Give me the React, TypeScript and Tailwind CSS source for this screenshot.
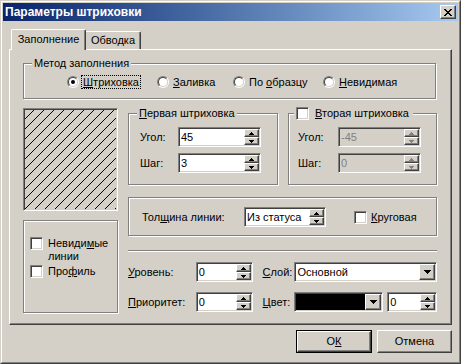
import React from 'react';

const sunken =
  'border border-t-[#808080] border-l-[#808080] border-r-white border-b-white shadow-[inset_1px_1px_0_#404040,inset_-1px_-1px_0_#d4d0c8]';
const raised =
  'border border-t-white border-l-white border-r-[#404040] border-b-[#404040] shadow-[inset_-1px_-1px_0_#808080]';
const etched = 'border border-[#808080] shadow-[inset_1px_1px_0_#fff,1px_1px_0_#fff]';

// small pixel arrows
function Arrow({ down, color = '#000', wide = false }: { down?: boolean; color?: string; wide?: boolean }) {
  const rows = wide ? [7, 5, 3, 1] : [5, 3, 1];
  const w = rows[0];
  const list = down ? rows : [...rows].reverse();
  return (
    <svg width={w} height={rows.length} shapeRendering="crispEdges" className="block">
      {list.map((n, i) => (
        <rect key={i} x={(w - n) / 2} y={i} width={n} height={1} fill={color} />
      ))}
    </svg>
  );
}

function SpinBtn({ down, disabled }: { down?: boolean; disabled?: boolean }) {
  return (
    <div className={`${raised} h-[8px] bg-[#d4d0c8] flex items-center justify-center`}>
      <Arrow down={down} color={disabled ? '#808080' : '#000'} />
    </div>
  );
}

function SpinField({ value, className, disabled }: { value: string; className: string; disabled?: boolean }) {
  return (
    <div
      className={`${sunken} ${className} h-[20px] p-px flex ${
        disabled ? 'bg-[#d4d0c8] text-[#808080]' : 'bg-white'
      }`}
    >
      <div className="flex-1 pl-[1px] leading-[16px]">{value}</div>
      <div className="w-[15px] flex flex-col">
        <SpinBtn disabled={disabled} />
        <SpinBtn down disabled={disabled} />
      </div>
    </div>
  );
}

function DropBtn() {
  return (
    <div className={`${raised} w-[16px] h-full bg-[#d4d0c8] flex items-center justify-center`}>
      <Arrow down wide />
    </div>
  );
}

function Check() {
  return <div className={`${sunken} w-[13px] h-[13px] bg-white shrink-0`} />;
}

function Radio({ checked }: { checked?: boolean }) {
  return (
    <div className="w-[12px] h-[12px] rounded-full border border-t-[#808080] border-l-[#808080] border-r-white border-b-white shrink-0">
      <div className="w-full h-full rounded-full bg-white border border-t-[#404040] border-l-[#404040] border-r-[#d4d0c8] border-b-[#d4d0c8] flex items-center justify-center">
        {checked && <div className="w-[4px] h-[4px] rounded-full bg-black" />}
      </div>
    </div>
  );
}

function Hatch() {
  const lines = [];
  for (let k = -100; k < 100; k += 10) lines.push(k);
  return (
    <svg width="91" height="99" shapeRendering="crispEdges" className="block">
      {lines.map((k) => (
        <line key={k} x1={k} y1={99} x2={k + 99} y2={0} stroke="#000" strokeWidth="1" />
      ))}
    </svg>
  );
}

function CloseGlyph() {
  const rows = ['11....11', '.11..11.', '..1111..', '...11...', '..1111..', '.11..11.', '11....11'];
  return (
    <svg width="8" height="7" shapeRendering="crispEdges" className="block">
      {rows.flatMap((r, y) =>
        r.split('').map((c, x) => (c === '1' ? <rect key={`${x}-${y}`} x={x} y={y} width={1} height={1} fill="#000" /> : null))
      )}
    </svg>
  );
}

export default function App() {
  return (
    <div className="w-[461px] h-[364px] bg-[#d4d0c8] border border-t-[#d4d0c8] border-l-[#d4d0c8] border-r-[#404040] border-b-[#404040] font-['Liberation_Sans',Arial,sans-serif] text-[11px] text-black leading-[13px]">
      <div className="h-full border border-t-white border-l-white border-r-[#808080] border-b-[#808080] p-px">
        {/* Title bar */}
        <div className="h-[18px] bg-linear-to-r from-[#0a246a] to-[#a6caf0] flex items-center justify-between pl-[2px] pr-[2px]">
          <span className="text-white font-bold text-[12px]">Параметры штриховки</span>
          <div className={`${raised} w-[16px] h-[14px] bg-[#d4d0c8] flex items-center justify-center`}>
            <CloseGlyph />
          </div>
        </div>

        <div className="pl-[6px]">
          {/* Tabs */}
          <div className="mt-[8px] h-[20px] flex items-end">
            <div className="ml-[2px] w-[75px] h-[21px] -mb-px relative z-10 bg-[#d4d0c8] border border-b-0 border-t-white border-l-white border-r-[#404040] shadow-[inset_-1px_0_0_#808080] rounded-t-[2px] flex items-center justify-center pb-[2px]">
              Заполнение
            </div>
            <div className="w-[55px] h-[18px] bg-[#d4d0c8] border border-b-0 border-t-white border-l-0 border-r-[#404040] shadow-[inset_-1px_0_0_#808080] rounded-tr-[2px] flex items-center justify-center">
              Обводка
            </div>
          </div>

          {/* Tab panel */}
          <div className={`${raised} w-[443px] h-[276px] pt-[13px] pl-[13px]`}>
            {/* Метод заполнения */}
            <div className={`${etched} relative w-[413px] h-[36px] pt-[11px] pl-[43px]`}>
              <span className="absolute left-[8px] -top-[7px] px-[2px] bg-[#d4d0c8]">Метод заполнения</span>
              <div className="h-[14px] flex items-center">
                <div className="w-[90px] flex items-center">
                  <Radio checked />
                  <span className="ml-[2px] px-[1px] border border-dotted border-black leading-[12px]">
                    <u>Ш</u>триховка
                  </span>
                </div>
                <div className="w-[76px] flex items-center">
                  <Radio />
                  <span className="ml-[4px]">
                    <u>З</u>аливка
                  </span>
                </div>
                <div className="w-[90px] flex items-center">
                  <Radio />
                  <span className="ml-[4px]">
                    По <u>о</u>бразцу
                  </span>
                </div>
                <div className="flex items-center">
                  <Radio />
                  <span className="ml-[4px]">
                    <u>Н</u>евидимая
                  </span>
                </div>
              </div>
            </div>

            <div className="mt-[9px] flex gap-[10px]">
              {/* Left column */}
              <div className="w-[95px]">
                <div className={`${sunken} h-[103px] p-px bg-[#d4d0c8]`}>
                  <Hatch />
                </div>
                <div className={`${etched} mt-[9px] h-[93px] pt-[16px] pl-[6px]`}>
                  <div className="flex items-start">
                    <Check />
                    <span className="ml-[5px]">
                      Невиди<u>м</u>ые
                      <br />
                      линии
                    </span>
                  </div>
                  <div className="mt-[2px] flex items-center">
                    <Check />
                    <span className="ml-[5px]">
                      Про<u>ф</u>иль
                    </span>
                  </div>
                </div>
              </div>

              {/* Right column */}
              <div className="w-[309px] pt-[5px]">
                <div className="flex gap-[10px]">
                  <div className={`${etched} relative w-[150px] h-[72px] pt-[13px] pl-[11px]`}>
                    <span className="absolute left-[8px] -top-[7px] px-[2px] bg-[#d4d0c8]">
                      <u>П</u>ервая штриховка
                    </span>
                    <div className="flex items-center">
                      <span className="w-[38px]">Угол:</span>
                      <SpinField value="45" className="w-[83px]" />
                    </div>
                    <div className="mt-[6px] flex items-center">
                      <span className="w-[38px]">Шаг:</span>
                      <SpinField value="3" className="w-[83px]" />
                    </div>
                  </div>
                  <div className={`${etched} relative w-[149px] h-[72px] pt-[13px] pl-[9px]`}>
                    <span className="absolute left-[5px] -top-[7px] pl-[2px] pr-[4px] bg-[#d4d0c8] flex items-center">
                      <Check />
                      <span className="ml-[6px]">
                        <u>В</u>торая штриховка
                      </span>
                    </span>
                    <div className="flex items-center">
                      <span className="w-[40px]">Угол:</span>
                      <SpinField value="-45" className="w-[83px]" disabled />
                    </div>
                    <div className="mt-[6px] flex items-center">
                      <span className="w-[40px]">Шаг:</span>
                      <SpinField value="0" className="w-[83px]" disabled />
                    </div>
                  </div>
                </div>

                {/* Толщина линии */}
                <div className={`${etched} mt-[12px] h-[39px] pt-[9px] pl-[13px] flex items-start`}>
                  <span className="w-[102px] leading-[20px]">
                    Тол<u>щ</u>ина линии:
                  </span>
                  <SpinField value="Из статуса" className="w-[82px]" />
                  <div className="ml-[28px] h-[20px] flex items-center">
                    <Check />
                    <span className="ml-[4px]">
                      <u>К</u>руговая
                    </span>
                  </div>
                </div>

                <div className="mt-[14px] h-[2px] border-t border-t-[#808080] border-b border-b-white" />

                <div className="mt-[10px] flex items-center">
                  <span className="w-[68px]">
                    <u>У</u>ровень:
                  </span>
                  <SpinField value="0" className="w-[57px]" />
                  <span className="ml-[10px] w-[32px]">
                    <u>С</u>лой:
                  </span>
                  <div className={`${sunken} w-[143px] h-[20px] p-px bg-white flex`}>
                    <div className="flex-1 pl-[1px] leading-[16px]">Основной</div>
                    <DropBtn />
                  </div>
                </div>

                <div className="mt-[10px] flex items-center">
                  <span className="w-[68px]">
                    <u>П</u>риоритет:
                  </span>
                  <SpinField value="0" className="w-[57px]" />
                  <span className="ml-[10px] w-[32px]">
                    <u>Ц</u>вет:
                  </span>
                  <div className={`${sunken} w-[89px] h-[20px] p-px bg-white flex`}>
                    <div className="flex-1 bg-black" />
                    <DropBtn />
                  </div>
                  <SpinField value="0" className="ml-[4px] w-[50px]" />
                </div>
              </div>
            </div>
          </div>

          {/* Buttons */}
          <div className="w-[443px] mt-[5px] flex justify-end gap-[5px]">
            <div className="w-[76px] h-[23px] border border-black">
              <div className={`${raised} h-full bg-[#d4d0c8] flex items-center justify-center`}>
                О<u>К</u>
              </div>
            </div>
            <div className={`${raised} w-[75px] h-[23px] bg-[#d4d0c8] flex items-center justify-center`}>
              Отмена
            </div>
          </div>
        </div>
      </div>
    </div>
  );
}
